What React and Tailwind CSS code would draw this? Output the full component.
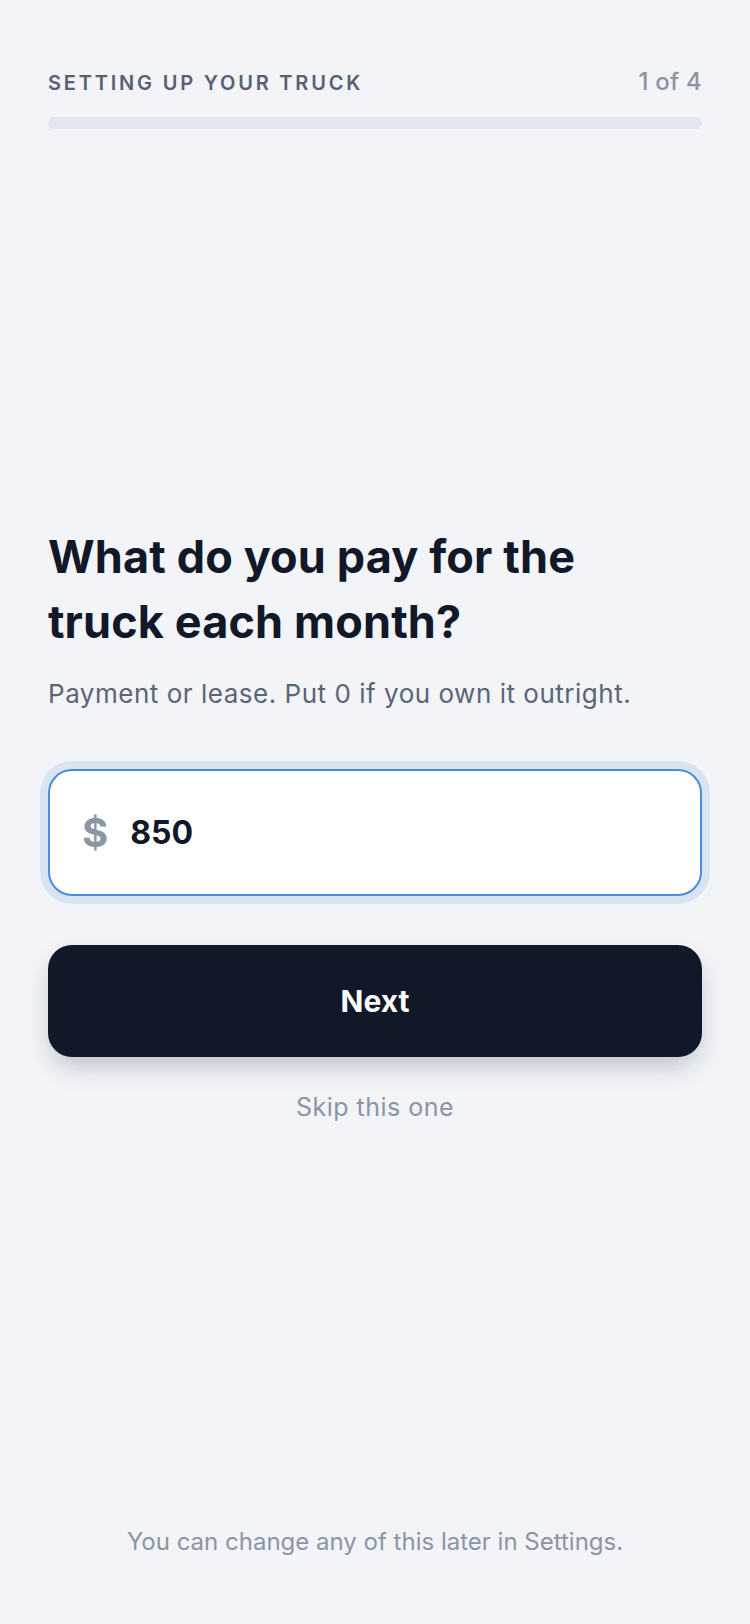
import { useState } from "react";

function App() {
  const [amount, setAmount] = useState("850");

  return (
    <div className="min-h-screen bg-[#f2f4f8] flex flex-col px-12 pt-[68px] pb-[66px] font-['Inter','Noto_Sans',sans-serif]">
      <div className="flex items-baseline justify-between">
        <span className="text-[20px] leading-[28px] font-semibold tracking-[0.14em] text-[#566173]">
          SETTING UP YOUR TRUCK
        </span>
        <span className="text-[24px] leading-[28px] font-medium tracking-[0.01em] text-[#8a94a3]">
          1 of 4
        </span>
      </div>
      <div className="mt-5 h-3 rounded-full bg-[#e2e7ef]">
        <div className="h-full w-0 rounded-full bg-[#111827]"></div>
      </div>

      <div className="flex-1 flex flex-col justify-center pb-2">
        <h1 className="text-[45px] leading-[65px] font-bold tracking-[0.003em] text-[#111827]">
          What do you pay for the
          <br />
          truck each month?
        </h1>
        <p className="mt-[22px] text-[26px] leading-[36px] tracking-[0.02em] text-[#5a6576]">
          Payment or lease. Put 0 if you own it outright.
        </p>

        <div className="mt-[57px] h-[127px] flex items-center gap-[22px] px-8 rounded-[24px] bg-white border-2 border-[#4a8bdc] ring-8 ring-[#d9e4f2]">
          <span className="text-[40px] leading-none font-bold text-[#8b95a5]">$</span>
          <input
            value={amount}
            onChange={(e) => setAmount(e.target.value)}
            inputMode="numeric"
            className="flex-1 min-w-0 bg-transparent outline-none text-[32px] font-bold text-[#111827]"
          />
        </div>

        <button className="mt-[49px] h-[112px] rounded-[24px] bg-[#111827] text-white text-[30px] font-bold shadow-[0_12px_28px_-6px_rgba(17,24,39,0.28)]">
          Next
        </button>

        <button className="mt-[34px] text-[25px] leading-[32px] tracking-[0.02em] text-[#8b95a5]">
          Skip this one
        </button>
      </div>

      <p className="text-center text-[24px] leading-[32px] text-[#8b95a5]">
        You can change any of this later in Settings.
      </p>
    </div>
  );
}

export default App;
